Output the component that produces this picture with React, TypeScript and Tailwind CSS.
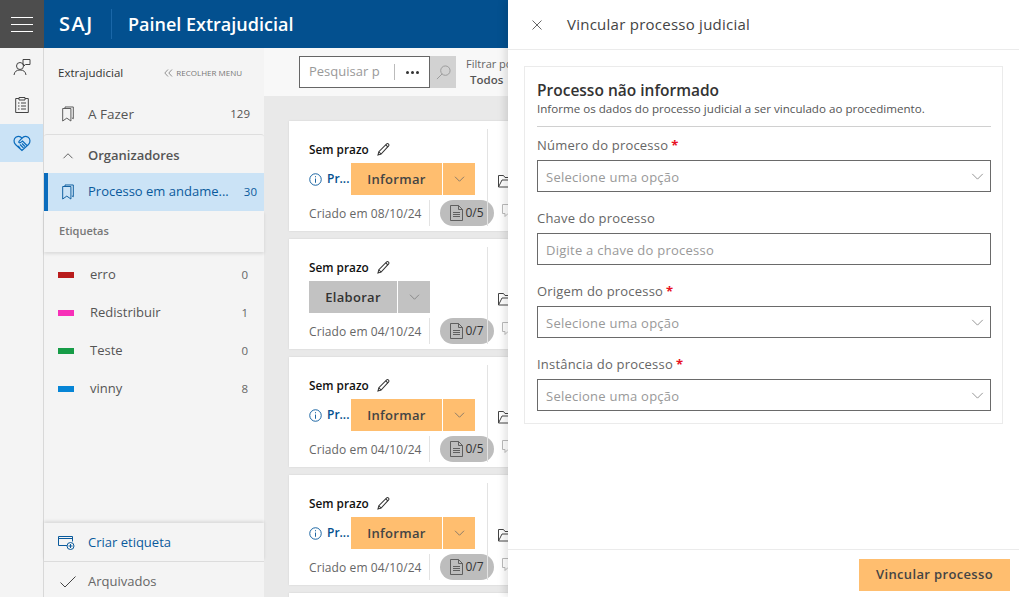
import React from "react";

const font = { fontFamily: '"Open Sans", "Noto Sans", sans-serif' };

const Chevron = ({ className = "" }: { className?: string }) => (
  <svg viewBox="0 0 14 8" className={className} fill="none" stroke="currentColor" strokeWidth="1">
    <path d="M1 1l6 6 6-6" />
  </svg>
);

const Bookmark = ({ className = "" }: { className?: string }) => (
  <svg viewBox="0 0 14 18" className={className} fill="none" stroke="currentColor" strokeWidth="1.1">
    <path d="M3.500 2.500V.8h9.700v13.700l-1.600-1" />
    <path d="M.8 2.600h9.600v14.600l-4.800-3.400-4.800 3.400z" />
  </svg>
);

const Pencil = () => (
  <svg viewBox="0 0 14 14" className="ml-[8px] h-[13px] w-[13px] text-[#333]" fill="none" stroke="currentColor" strokeWidth="1.100">
    <path d="M1 13l1-3.600L10.400 1c.6-.5 1.400-.5 2 .1s.6 1.400.1 2L4.400 12z" />
    <path d="M2 9.400L4.400 12M9.400 2l2.500 2.500" />
  </svg>
);

const DocIcon = () => (
  <svg viewBox="0 0 13 16" className="h-[16px] w-[13px] text-[#555]" fill="none" stroke="currentColor" strokeWidth="0.900">
    <path d="M.5.500h8l4 4v11H.5z" />
    <path d="M8.500.5v4h4M3 7.500h7M3 9.500h7M3 11.500h7" />
  </svg>
);

const Card = ({ date, count, elaborar }: { date: string; count: string; elaborar?: boolean }) => (
  <div className="flex h-[110px] w-[260px] shrink-0 bg-white pl-5 shadow-[0_0_2px_rgba(0,0,0,0.1)]">
    <div className="flex w-[178px] shrink-0 flex-col pt-[20px]">
      <div className="flex h-[17px] items-center text-[11.800px] font-semibold text-[#111]">
        Sem prazo
        <Pencil />
      </div>
      <div className="mt-[5px] flex h-[32px] items-center">
        {elaborar ? (
          <>
            <span className="flex h-[32px] w-[88px] items-center justify-center bg-[#c2c2c2] pt-[1px] text-[13px] font-semibold tracking-[0.3px] text-[#333]">Elaborar</span>
            <span className="ml-px flex h-[32px] w-[32px] items-center justify-center bg-[#c2c2c2] text-[#777]"><Chevron className="h-[6px] w-[11px]" /></span>
          </>
        ) : (
          <>
            <svg viewBox="0 0 14 14" className="h-[13px] w-[13px] text-[#0a5a9c]" fill="none" stroke="currentColor" strokeWidth="1">
              <circle cx="7" cy="7" r="6.200" />
              <path d="M7 6v4.500M7 3.400v1.200" />
            </svg>
            <span className="ml-[5px] w-[24px] text-[12px] font-semibold text-[#03508f]">Pr...</span>
            <span className="flex h-[32px] w-[91px] items-center justify-center bg-[#ffbe6f] pt-[1px] text-[13px] font-semibold tracking-[0.3px] text-[#444]">Informar</span>
            <span className="ml-px flex h-[32px] w-[32px] items-center justify-center bg-[#ffbe6f] text-[#666]"><Chevron className="h-[6px] w-[11px]" /></span>
          </>
        )}
      </div>
      <div className="mt-[5px] flex h-[26px] items-center">
        <span className="w-[120px] shrink-0 whitespace-nowrap pt-[2px] text-[12px] tracking-[0.1px] text-[#666]">Criado em {date}</span>
        <span className="h-[26px] shrink-0 border-l border-[#e3e3e3]" />
        <span className="ml-[10px] flex h-[26px] w-[54px] shrink-0 items-center justify-center gap-[2px] rounded-full bg-[#bdbdbd] text-[12px] text-[#333]">
          <DocIcon />
          {count}
        </span>
      </div>
    </div>
    <div className="relative mt-2 mb-[5px] flex flex-col items-start border-l border-[#e3e3e3] pl-[10px]">
      <svg viewBox="0 0 16 14" className="mt-[45px] h-[14px] w-[16px] text-[#444]" fill="none" stroke="currentColor" strokeWidth="1">
        <path d="M.5 13V1.500h5l1.500 2h7v2.500H4L.5 13zm0 0H12.500L15.500 6H14" />
      </svg>
      <svg viewBox="0 0 14 14" className="mt-[16px] ml-[4px] h-[14px] w-[14px] text-[#bbb]" fill="none" stroke="currentColor" strokeWidth="1">
        <path d="M.5.500h13v9H6l-3 3v-3H.5z" />
      </svg>
    </div>
  </div>
);

const Tag = ({ color, name, n }: { color: string; name: string; n: string }) => (
  <div className="flex h-[38px] items-center pl-[14px] pr-[16px]">
    <span className={`h-[6px] w-[16px] ${color}`} />
    <span className="ml-4 flex-1 text-[13px] text-[#555]">{name}</span>
    <span className="text-[11.500px] text-[#666]">{n}</span>
  </div>
);

const Field = ({ label, req, placeholder, select }: { label: string; req?: boolean; placeholder: string; select?: boolean }) => (
  <div className="mb-[17px]">
    <div className="mb-[4px] flex h-[20px] items-center text-[13px] tracking-[0.2px] text-[#666]">
      {label}
      {req && <span className="ml-[3px] font-bold text-[#e81123]">*</span>}
    </div>
    <div className="flex h-[32px] items-center justify-between border border-[#6a6a6a] pl-2 pr-[5px] text-[13px] tracking-[0.25px] text-[#999]">
      <span className="pt-[3px]">{placeholder}</span>
      {select && <Chevron className="mr-[1px] h-[7px] w-[13px] text-[#888]" />}
    </div>
  </div>
);

export default function App() {
  return (
    <div style={font} className="relative flex h-[597px] w-[1019px] flex-col overflow-hidden bg-[#e9e9e9]">
      <header className="flex h-[48px] shrink-0 bg-[#03508f] text-white">
        <div className="flex w-[44px] flex-col items-center justify-center gap-[6px] bg-[#4d4d4d]">
          <span className="h-px w-[22px] bg-white" />
          <span className="h-px w-[22px] bg-white" />
          <span className="h-px w-[22px] bg-white" />
        </div>
        <div className="flex items-center pl-[15px]">
          <span className="w-[37px] text-[20px] font-semibold tracking-[1.500px]">SAJ</span>
          <span className="ml-[15px] h-[30px] border-l border-[#1a67a8]" />
          <span className="ml-[16px] text-[18px] font-semibold">Painel Extrajudicial</span>
        </div>
      </header>
      <div className="flex min-h-0 flex-1">
        <nav className="flex w-[44px] shrink-0 flex-col items-center border-r border-[#d8d8d8] bg-[#f4f4f4]">
          <div className="flex h-[38px] w-full items-center justify-center">
            <svg viewBox="0 0 18 18" className="h-[18px] w-[18px] text-[#444]" fill="none" stroke="currentColor" strokeWidth="1">
              <circle cx="7" cy="8" r="3.500" />
              <path d="M1 17c.5-3.500 2.500-5 6-5s5.500 1.500 6 5" />
              <path d="M10 1.500h7v5h-4.500l-1.500 1.500v-1.500h-1z" />
            </svg>
          </div>
          <div className="flex h-[38px] w-full items-center justify-center">
            <svg viewBox="0 0 14 16" className="h-[16px] w-[14px] text-[#444]" fill="none" stroke="currentColor" strokeWidth="1">
              <path d="M4 1.500H.7v14h12.600v-14H10" />
              <path d="M4 .5h6v2.500H4zM3 6h1.500M6 6h5M3 9h1.500M6 9h5M3 12h1.500M6 12h5" />
            </svg>
          </div>
          <div className="flex h-[38px] w-full items-center justify-center bg-[#cbe3f6]">
            <svg viewBox="0 0 18 18" className="h-[18px] w-[18px] text-[#0a6cbd]" fill="none" stroke="currentColor" strokeWidth="1.200">
              <path d="M9 16.500 2.500 10.500C.5 8.500.5 5 2.800 3.300 5 1.800 7.500 2.300 9 4.200c1.500-1.900 4-2.400 6.200-.9 2.300 1.700 2.300 5.200.3 7.200z" />
              <path d="M9 4.200 6 7.300c-.8 1 .5 2 1.500 1.300L9.500 7l4.500 4.500M5 12l2 2M7 10.500l3.500 3.500M9 9.500l3 3" />
            </svg>
          </div>
        </nav>
        <aside className="flex w-[220px] shrink-0 flex-col bg-[#f4f4f4]">
          <div className="flex h-[48px] items-center justify-between pl-[14px] pr-[22px] pt-[2px]">
            <span className="text-[11.500px] text-[#333]">Extrajudicial</span>
            <span className="flex items-center gap-[3px] text-[8px] text-[#777]">
              <svg viewBox="0 0 9 8" className="h-[8px] w-[9px]" fill="none" stroke="currentColor" strokeWidth="0.800">
                <path d="M4 .5.800 4 4 7.500M8 .5 4.800 4 8 7.500" />
              </svg>
              RECOLHER MENU
            </span>
          </div>
          <div className="flex h-[38px] items-center pb-[2px] pl-[18px] pr-[14px]">
            <Bookmark className="h-[16px] w-[12px] text-[#555]" />
            <span className="ml-[14px] flex-1 text-[13.500px] font-medium text-[#555]">A Fazer</span>
            <span className="text-[11.500px] text-[#555]">129</span>
          </div>
          <div className="flex h-[39px] items-center rounded-t-[3px] border-t border-[#dedede] pt-[3px] pl-[18px]">
            <Chevron className="h-[6px] w-[12px] rotate-180 text-[#333]" />
            <span className="ml-[14px] text-[13px] font-semibold text-[#555]">Organizadores</span>
          </div>
          <div className="flex h-[38px] items-center border-l-[4px] border-[#0a6cbd] bg-[#cbe3f6] pl-[14px] pr-[7px] text-[#0a5a9c]">
            <Bookmark className="h-[16px] w-[12px]" />
            <span className="ml-[14px] flex-1 text-[13px] whitespace-nowrap">Processo em andame...</span>
            <span className="text-[11.500px]">30</span>
          </div>
          <div className="flex h-[41px] shrink-0 items-center pl-[15px] text-[11px] font-semibold text-[#777] shadow-[0_2px_3px_rgba(0,0,0,0.1)]">Etiquetas</div>
          <div className="flex-1 pt-[4px]">
            <Tag color="bg-[#b91c1c]" name="erro" n="0" />
            <Tag color="bg-[#f72fb8]" name="Redistribuir" n="1" />
            <Tag color="bg-[#169c47]" name="Teste" n="0" />
            <Tag color="bg-[#0685d6]" name="vinny" n="8" />
          </div>
          <div className="flex h-[38px] shrink-0 items-center pl-[14px] pt-[2px] text-[#0a5a9c] shadow-[0_-2px_3px_rgba(0,0,0,0.1)]">
            <svg viewBox="0 0 17 14" className="h-[14px] w-[17px]" fill="none" stroke="currentColor" strokeWidth="1">
              <path d="M9 9.500H.5V.5h14v5M.5 2.500h14" />
              <circle cx="12.500" cy="10" r="3.500" />
              <path d="M12.500 8v4M10.500 10h4" />
            </svg>
            <span className="ml-[13px] text-[13px]">Criar etiqueta</span>
          </div>
          <div className="flex h-[36px] shrink-0 items-center border-t border-[#dcdcdc] pl-[16px] pt-[4px] text-[#666]">
            <svg viewBox="0 0 16 12" className="h-[12px] w-[16px] text-[#444]" fill="none" stroke="currentColor" strokeWidth="1">
              <path d="M.5 6.500l4.500 4.500L15.500.5" />
            </svg>
            <span className="ml-[12px] text-[13px]">Arquivados</span>
          </div>
        </aside>
        <main className="min-w-0 flex-1 overflow-hidden">
          <div className="flex h-[48px] items-center bg-[#f8f8f8] pl-[35px]">
            <div className="flex h-[32px] w-[131px] items-center border border-[#666] bg-white pl-[9px]">
              <input placeholder="Pesquisar processo" className="w-[71px] min-w-0 bg-transparent text-[13px] outline-none placeholder:text-[#999]" />
              <span className="ml-[14px] h-[16px] border-l border-[#bbb]" />
              <span className="ml-[11px] flex gap-[2px]">
                <i className="h-[3px] w-[3px] rounded-full bg-[#333]" />
                <i className="h-[3px] w-[3px] rounded-full bg-[#333]" />
                <i className="h-[3px] w-[3px] rounded-full bg-[#333]" />
              </span>
            </div>
            <div className="flex h-[32px] w-[26px] items-center justify-center bg-[#d2d2d2] text-[#999]">
              <svg viewBox="0 0 16 16" className="h-[15px] w-[15px]" fill="none" stroke="currentColor" strokeWidth="1">
                <circle cx="10" cy="6" r="5" />
                <path d="M6.500 9.500 1 15" />
              </svg>
            </div>
            <div className="ml-[10px] flex flex-col whitespace-nowrap">
              <span className="text-[11px] leading-[15px] text-[#666]">Filtrar por</span>
              <span className="pl-[4px] text-[11.500px] leading-[17px] font-semibold text-[#555]">Todos</span>
            </div>
          </div>
          <div className="flex flex-col gap-2 pt-[25px] pl-[25px]">
            <Card date="08/10/24" count="0/5" />
            <Card date="04/10/24" count="0/7" elaborar />
            <Card date="04/10/24" count="0/5" />
            <Card date="04/10/24" count="0/7" />
            <div className="h-[110px] w-[260px] shrink-0 bg-white shadow-[0_0_2px_rgba(0,0,0,0.1)]" />
          </div>
        </main>
      </div>
      <section className="absolute top-0 right-0 bottom-0 z-10 flex w-[511px] flex-col bg-white shadow-[-3px_0_8px_rgba(0,0,0,0.12)]">
        <div className="flex h-[50px] shrink-0 items-center border-b border-[#ebebeb] pl-[24px]">
          <svg viewBox="0 0 10 10" className="h-[10px] w-[10px] text-[#555]" fill="none" stroke="currentColor" strokeWidth="0.900">
            <path d="M.5.500l9 9M9.500.5l-9 9" />
          </svg>
          <span className="ml-[25px] text-[15px] tracking-[0.25px] text-[#444]">Vincular processo judicial</span>
        </div>
        <div className="flex-1 px-4 pt-4">
          <div className="h-[358px] border border-[#ebebeb] pl-3 pr-[11px] pt-[12px]">
            <div className="text-[15.500px] leading-[22px] font-semibold text-[#333]">Processo não informado</div>
            <div className="border-b border-[#d0d0d0] pb-[10px] text-[11.600px] leading-[15px] text-[#555]">Informe os dados do processo judicial a ser vinculado ao procedimento.</div>
            <div className="pt-[9px]">
              <Field label="Número do processo" req placeholder="Selecione uma opção" select />
              <Field label="Chave do processo" placeholder="Digite a chave do processo" />
              <Field label="Origem do processo" req placeholder="Selecione uma opção" select />
              <Field label="Instância do processo" req placeholder="Selecione uma opção" select />
            </div>
          </div>
        </div>
        <div className="flex h-[48px] shrink-0 items-start justify-end border-t border-[#ebebeb] pt-[9px] pr-[9px]">
          <span className="flex h-[32px] w-[151px] items-center justify-center bg-[#ffbe6f] text-[13px] font-semibold tracking-[0.35px] text-[#444]">Vincular processo</span>
        </div>
      </section>
    </div>
  );
}
